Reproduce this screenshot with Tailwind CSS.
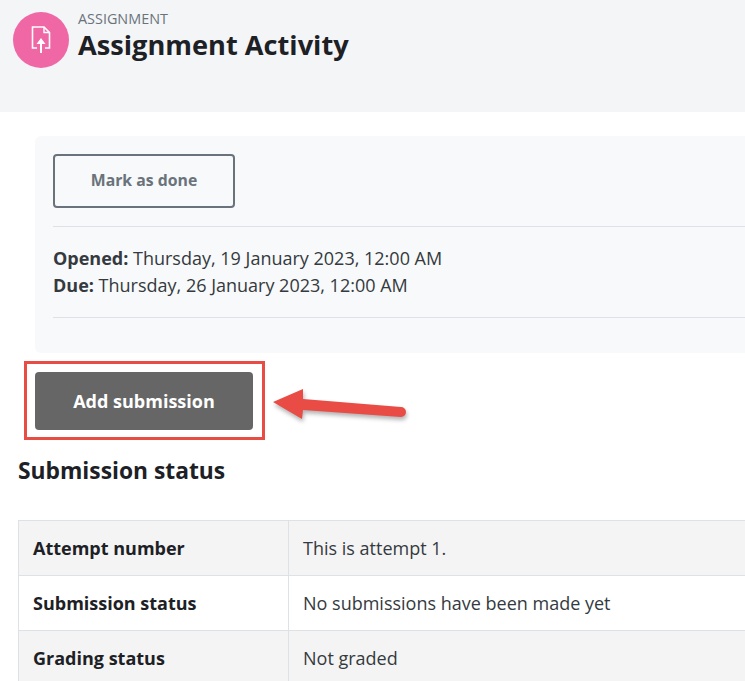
<!DOCTYPE html>
<html>
  <head>
    <meta charset="UTF-8">
    <title>Assignment Activity</title>
    <script src="https://cdn.jsdelivr.net/npm/@tailwindcss/browser@4"></script>
  </head>
  <body class="bg-white overflow-hidden font-['Open_Sans',sans-serif]">
    <div class="relative w-[745px] h-[681px] overflow-hidden">
      <!-- page header -->
      <header class="h-[112px] bg-[#f4f5f7] flex items-start pl-[13px] pt-[12px] gap-[9px]">
        <div class="w-[56px] h-[56px] rounded-full bg-[#f067a6] flex items-center justify-center shrink-0">
          <svg width="24" height="30" viewBox="0 0 24 30" fill="none" stroke="#fff" stroke-width="1.6">
            <path d="M8 23H3.500V2H15l5.500 5.500V23H16"/>
            <path d="M15 2v5.500h5.500" stroke-width="1.4"/>
            <path d="M12 13l-4.500 6H11V28h2v-9h3.500z" fill="#fff" stroke="none"/>
          </svg>
        </div>
        <div>
          <div class="text-[14.4px] leading-[16px] mt-[-1px] text-[#6a737b]">ASSIGNMENT</div>
          <h1 class="mt-[2px] text-[27.2px] leading-[32px] font-bold text-[#1d2125]">Assignment Activity</h1>
        </div>
      </header>

      <!-- activity info -->
      <section class="mt-[24px] ml-[35px] h-[217px] bg-[#f8f9fa] rounded-l-[6px] pl-[18px] pt-[18px]">
        <button class="block w-[182px] h-[54px] border-2 border-[#6a737b] rounded-[4px] text-[15.8px] leading-[22px] pb-[2px] font-bold text-[#6a737b]">Mark as done</button>
        <div class="mt-[18px] border-t border-b border-[#dee2e6] h-[92px] pt-[18px] text-[18px] leading-[27px] text-[#343a40]">
          <div><strong class="font-bold">Opened:</strong> Thursday, 19 January 2023, 12:00 AM</div>
          <div><strong class="font-bold">Due:</strong> Thursday, 26 January 2023, 12:00 AM</div>
        </div>
      </section>

      <!-- add submission, red box from the annotation -->
      <div class="mt-[8px] ml-[24px] w-[241px] h-[79px] border-[3px] border-[#e84c45] pl-[8px] pt-[8px]">
        <button class="block w-[218px] h-[58px] bg-[#666666] rounded-[4px] text-[18px] font-bold text-white">Add submission</button>
      </div>

      <h2 class="mt-[14px] ml-[18px] text-[22.800px] leading-[33px] font-bold text-[#1d2125]">Submission status</h2>

      <table class="mt-[33px] ml-[18px] w-[800px] border-collapse text-[18px] text-[#1d2125] table-fixed">
        <tbody>
          <tr class="h-[55px] bg-[#f4f4f4]">
            <th class="w-[270px] border border-[#dee2e6] pl-[14px] text-left font-bold">Attempt number</th>
            <td class="border border-[#dee2e6] pl-[14px] text-[#343a40]">This is attempt 1.</td>
          </tr>
          <tr class="h-[55px] bg-white">
            <th class="border border-[#dee2e6] pl-[14px] text-left font-bold">Submission status</th>
            <td class="border border-[#dee2e6] pl-[14px] text-[#343a40]">No submissions have been made yet</td>
          </tr>
          <tr class="h-[55px] bg-[#f4f4f4]">
            <th class="border border-[#dee2e6] pl-[14px] text-left font-bold">Grading status</th>
            <td class="border border-[#dee2e6] pl-[14px] text-[#343a40]">Not graded</td>
          </tr>
        </tbody>
      </table>

      <!-- annotation arrow -->
      <svg class="absolute left-[270px] top-[385px] drop-shadow-[1px_3px_2px_rgba(0,0,0,0.3)]" width="145" height="45" viewBox="0 0 145 45">
        <path d="M3 17L33 4V14L131 22a5 5 0 0 1 0 10L33 25L32 34z" fill="#e84c45"/>
      </svg>
    </div>
  </body>
</html>
